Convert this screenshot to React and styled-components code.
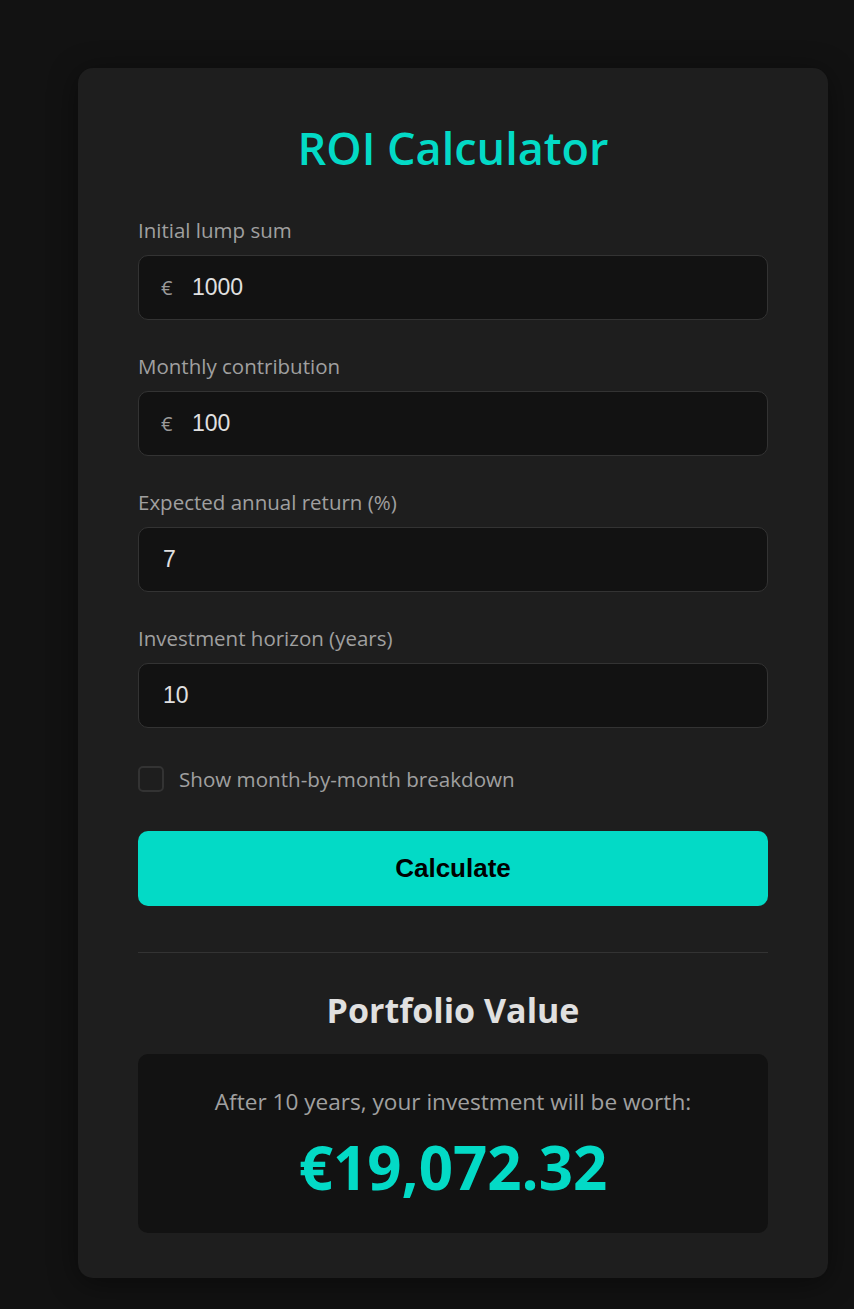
import React, { useState } from 'react';
import styled, { createGlobalStyle } from 'styled-components';

const GlobalStyle = createGlobalStyle`
  * { box-sizing: border-box; }
  html, body {
    margin: 0;
    background: #121212;
  }
  body {
    font-family: "Open Sans", "Noto Sans", sans-serif;
  }
`;

const fields = [
  { id: 'lump', label: 'Initial lump sum', value: '1000', prefix: '€' },
  { id: 'monthly', label: 'Monthly contribution', value: '100', prefix: '€' },
  { id: 'rate', label: 'Expected annual return (%)', value: '7' },
  { id: 'years', label: 'Investment horizon (years)', value: '10' },
];

const App = () => {
  const [values, setValues] = useState(
    fields.reduce((acc, f) => ({ ...acc, [f.id]: f.value }), {})
  );
  const [breakdown, setBreakdown] = useState(false);

  const handleChange = (id) => (e) => {
    setValues({ ...values, [id]: e.target.value });
  };

  return (
    <Page>
      <GlobalStyle />
      <Card>
        <Title>ROI Calculator</Title>
        {fields.map((field) => (
          <Group key={field.id}>
            <Label htmlFor={field.id}>{field.label}</Label>
            <InputWrap>
              {field.prefix && <Prefix>{field.prefix}</Prefix>}
              <Input
                id={field.id}
                value={values[field.id]}
                onChange={handleChange(field.id)}
                $hasPrefix={!!field.prefix}
              />
            </InputWrap>
          </Group>
        ))}
        <CheckRow>
          <Checkbox
            type="checkbox"
            checked={breakdown}
            onChange={(e) => setBreakdown(e.target.checked)}
          />
          <CheckLabel>Show month-by-month breakdown</CheckLabel>
        </CheckRow>
        <Button type="button">Calculate</Button>
        <Results>
          <ResultsTitle>Portfolio Value</ResultsTitle>
          <ResultBox>
            <ResultText>After 10 years, your investment will be worth:</ResultText>
            <ResultValue>€19,072.32</ResultValue>
          </ResultBox>
        </Results>
      </Card>
    </Page>
  );
};

export default App;

const Page = styled.div`
  min-height: 100vh;
  padding: 68px 26px 31px 78px;
`;

const Card = styled.div`
  width: 750px;
  background: #1e1e1e;
  border-radius: 15px;
  padding: 50px 60px 45px;
  box-shadow: 0 5px 30px rgba(0, 0, 0, 0.45);
`;

const Title = styled.h1`
  margin: 0 0 37px;
  text-align: center;
  color: #03dac6;
  font-size: 45px;
  font-weight: 600;
  line-height: 60px;
`;

const Group = styled.div`
  margin-bottom: 31px;
`;

const Label = styled.label`
  display: block;
  color: #a0a0a0;
  font-size: 20.5px;
  line-height: 30px;
  margin-bottom: 10px;
`;

const InputWrap = styled.div`
  position: relative;
  display: flex;
  align-items: center;
`;

const Prefix = styled.span`
  position: absolute;
  left: 23px;
  color: #9a9a9a;
  font-size: 20px;
  pointer-events: none;
`;

const Input = styled.input`
  width: 100%;
  height: 65px;
  background: #121212;
  border: 1px solid #333;
  border-radius: 10px;
  color: #e0e0e0;
  font-family: "Liberation Sans", Arial, sans-serif;
  font-size: 23px;
  padding: ${({ $hasPrefix }) => ($hasPrefix ? '0 20px 0 53px' : '0 24px')};
  outline: none;
`;

const CheckRow = styled.label`
  display: flex;
  align-items: center;
  gap: 15px;
  height: 40px;
  margin: 2px 0 32px;
`;

const Checkbox = styled.input`
  appearance: none;
  margin: 0;
  width: 26px;
  height: 26px;
  border: 2px solid #333;
  border-radius: 5px;
  background: #1e1e1e;
`;

const CheckLabel = styled.span`
  color: #a0a0a0;
  font-size: 20.6px;
`;

const Button = styled.button`
  width: 100%;
  height: 75px;
  border: none;
  border-radius: 10px;
  background: #03dac6;
  color: #000;
  font-family: "Liberation Sans", Arial, sans-serif;
  font-size: 26px;
  font-weight: 700;
  cursor: pointer;
`;

const Results = styled.div`
  margin-top: 46px;
  padding-top: 35px;
  border-top: 1px solid #333;
`;

const ResultsTitle = styled.h2`
  margin: 0 0 22px;
  text-align: center;
  color: #e0e0e0;
  font-size: 34px;
  font-weight: 700;
  line-height: 44px;
`;

const ResultBox = styled.div`
  background: #121212;
  border-radius: 10px;
  padding: 32px 20px 31px;
  text-align: center;
`;

const ResultText = styled.p`
  margin: 0 0 14px;
  color: #a0a0a0;
  font-size: 22.6px;
  line-height: 32px;
`;

const ResultValue = styled.div`
  color: #03dac6;
  font-size: 60px;
  font-weight: 700;
  line-height: 70px;
`;
